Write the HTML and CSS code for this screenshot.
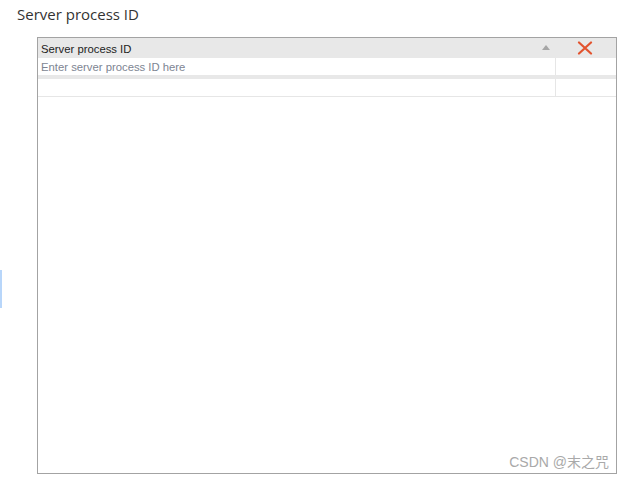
FILE: index.html
```html
<!DOCTYPE html>
<html>
<head>
<meta charset="utf-8">
<link rel="stylesheet" href="styles.css">
</head>
<body>
<div class="edge-mark"></div>
<h1 class="title">Server process ID</h1>
<div class="grid">
  <div class="grid-head">
    <div class="cell-main head-label">Server process ID</div>
    <div class="cell-sort">
      <svg width="8" height="5" viewBox="0 0 8 5"><polygon points="0,5 8,5 4,0" fill="#a6a6a6"/></svg>
    </div>
    <div class="cell-side">
      <svg width="16" height="14" viewBox="0 0 16 14"><path d="M2 1.5 L14 12.5 M14 1.5 L2 12.5" stroke="#e2532e" stroke-width="2.2" stroke-linecap="round" fill="none"/></svg>
    </div>
  </div>
  <div class="grid-row">
    <div class="cell-main placeholder">Enter server process ID here</div>
    <div class="cell-side"></div>
  </div>
  <div class="grid-sep"></div>
  <div class="grid-row last">
    <div class="cell-main"></div>
    <div class="cell-side"></div>
  </div>
  <div class="watermark">CSDN @末之咒</div>
</div>
</body>
</html>
```
FILE: styles.css
```css
html, body {
  margin: 0;
  padding: 0;
  background: #ffffff;
}
body {
  width: 624px;
  height: 480px;
  position: relative;
  overflow: hidden;
}
.edge-mark {
  position: absolute;
  left: 0;
  top: 270px;
  width: 2px;
  height: 38px;
  background: #b8d6fa;
}
.title {
  margin: 0;
  padding: 4px 0 0 17px;
  height: 33px;
  box-sizing: border-box;
  font-family: "Open Sans", "Noto Sans", sans-serif;
  font-weight: 400;
  font-size: 15px;
  line-height: 20px;
  color: #333333;
}
.grid {
  position: relative;
  margin: 4px 0 0 37px;
  width: 580px;
  height: 437px;
  box-sizing: border-box;
  border: 1px solid #a3a3a3;
  font-family: "Liberation Sans", Arial, sans-serif;
  font-size: 11.3px;
}
.grid-head {
  display: flex;
  height: 20px;
  background: #e8e8e8;
  align-items: center;
}
.head-label {
  color: #222222;
}
.cell-main {
  flex: 1;
  padding-left: 3px;
  padding-top: 1px;
  line-height: 16px;
}
.cell-sort {
  width: 13px;
  display: flex;
  align-items: center;
  padding-bottom: 2px;
}
.cell-side {
  width: 61px;
  box-sizing: border-box;
  display: flex;
  align-items: center;
  justify-content: center;
}
.grid-head .cell-side {
  padding-right: 2px;
}
.grid-head .cell-side svg {
  display: block;
}
.grid-row {
  display: flex;
  height: 17px;
}
.grid-row .cell-side {
  border-left: 1px solid #e6e6e6;
}
.grid-row.last {
  height: 17px;
  border-bottom: 1px solid #e6e6e6;
}
.grid-sep {
  height: 4px;
  background: #e8e8e8;
}
.placeholder {
  color: #7d8592;
}
.watermark {
  position: absolute;
  right: 7px;
  bottom: 2px;
  font-family: "Liberation Sans", "Noto Sans CJK SC", sans-serif;
  font-size: 14px;
  color: #a9a9a9;
}
```
